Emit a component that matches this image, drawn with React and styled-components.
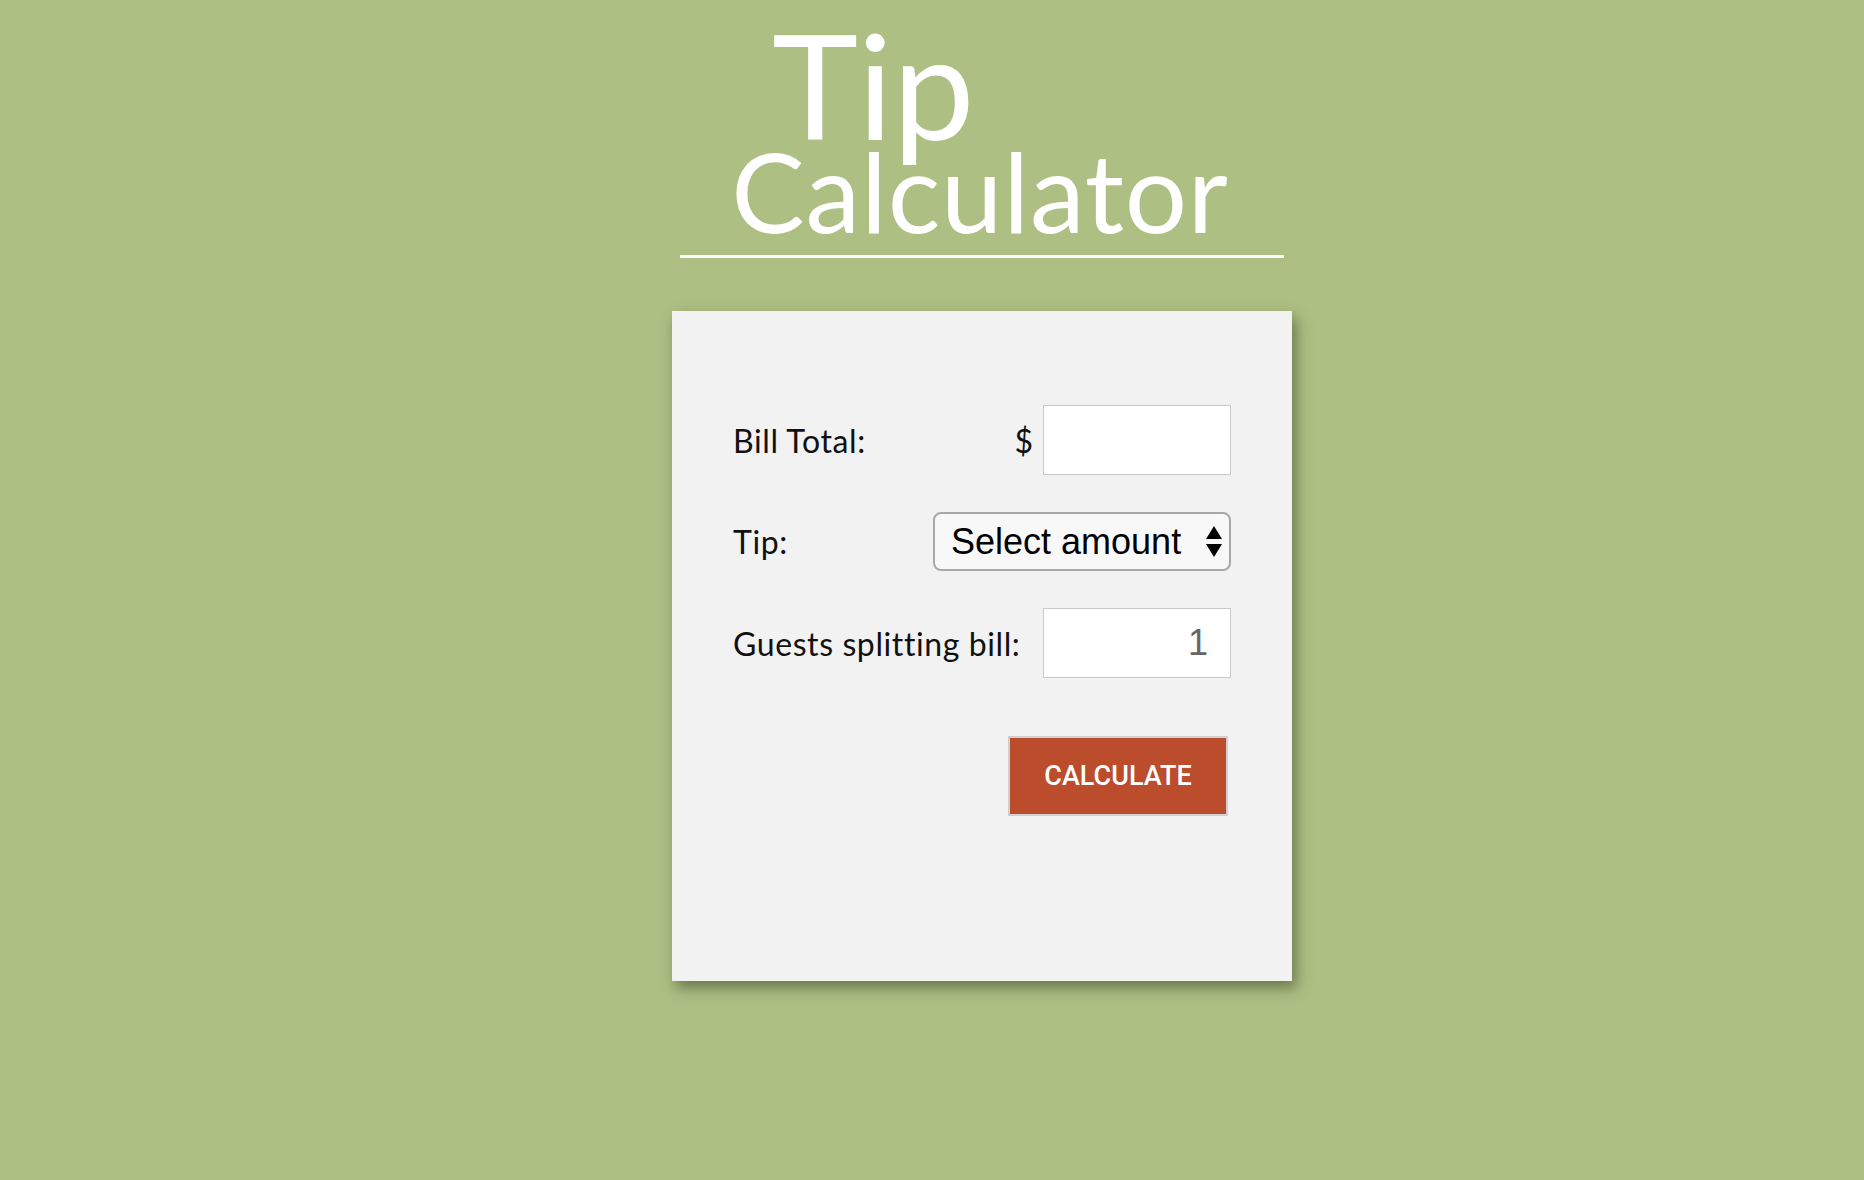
import React from 'react';
import styled, { createGlobalStyle } from 'styled-components';

const GlobalStyle = createGlobalStyle`
	body {
		margin: 0;
		background-color: #adbf83;
		font-family: 'Lato', 'Liberation Sans', sans-serif;
	}
`;

const Page = styled.main`
	min-height: 100vh;
	padding: 11px 0 0 100px;
	box-sizing: border-box;
`;

const Header = styled.header`
	width: 604px;
	margin: 0 auto;
	padding-bottom: 10px;
	border-bottom: 3px solid #fff;
	color: #fff;
`;

const TitleWord = styled.h1`
	margin: 0;
	font-weight: 400;
	line-height: 1;
	font-size: ${(p) => p.size}px;
	text-align: ${(p) => (p.offset ? 'left' : 'center')};
	padding-left: ${(p) => p.offset || 0}px;
	margin-top: ${(p) => p.pull || 0}px;
	padding-right: ${(p) => p.shift || 0}px;
	letter-spacing: ${(p) => p.spacing || 0}px;
`;

const Card = styled.section`
	width: 620px;
	height: 670px;
	margin: 53px auto 0;
	padding: 94px 61px 0;
	box-sizing: border-box;
	background-color: #f2f2f2;
	box-shadow: 4px 7px 13px rgba(40, 50, 20, 0.5);
	display: flex;
	flex-direction: column;
	gap: 37px;
`;

const Row = styled.div`
	display: flex;
	align-items: center;
	justify-content: space-between;
`;

const Label = styled.label`
	font-size: 32px;
	letter-spacing: 0.6px;
	color: #111;
`;

const Field = styled.div`
	display: flex;
	align-items: center;
	gap: 10px;
	font-size: 32px;
	color: #111;
`;

const TextBox = styled.input`
	width: 188px;
	height: 70px;
	box-sizing: border-box;
	border: 1px solid #c9c9c9;
	background: #fff;
	padding: 0 22px;
	font-family: 'Liberation Sans', Arial, sans-serif;
	font-size: 36px;
	color: #666;
	text-align: right;
	outline: none;
`;

const SelectWrap = styled.div`
	position: relative;
	width: 298px;
	height: 59px;
`;

const Select = styled.select`
	appearance: none;
	width: 100%;
	height: 100%;
	box-sizing: border-box;
	border: 2px solid #a8a8a8;
	border-radius: 8px;
	background: #f8f8f8;
	padding: 0 0 0 16px;
	font-family: 'Liberation Sans', Arial, sans-serif;
	font-size: 36px;
	color: #000;
	outline: none;
`;

const Arrows = styled.svg`
	position: absolute;
	right: 9px;
	top: 14px;
	pointer-events: none;
`;

const Button = styled.button`
	align-self: flex-end;
	margin: 21px 3px 0 0;
	width: 220px;
	height: 80px;
	border: 2px solid #cfcfcf;
	background-color: #bb4c2c;
	color: #fff;
	font-family: 'Roboto', 'Liberation Sans', Arial, sans-serif;
	font-weight: 500;
	font-size: 27px;
	cursor: pointer;
`;

export default function App() {
	return (
		<>
			<GlobalStyle />
			<Page>
				<Header>
					<TitleWord size={146} offset={92}>Tip</TitleWord>
					<TitleWord size={110} pull={-22} shift={4} spacing={0.8}>Calculator</TitleWord>
				</Header>
				<Card>
					<Row>
						<Label>Bill Total:</Label>
						<Field>
							$
							<TextBox type="text" />
						</Field>
					</Row>
					<Row>
						<Label>Tip:</Label>
						<SelectWrap>
							<Select defaultValue="">
								<option value="">Select amount</option>
								<option value="0.3">30% - Outstanding</option>
								<option value="0.2">20% - Good</option>
								<option value="0.15">15% - OK</option>
								<option value="0.1">10% - Bad</option>
							</Select>
							<Arrows width="16" height="31" viewBox="0 0 16 31">
								<path d="M8 0 L16 13 L0 13 Z M0 18 L16 18 L8 31 Z" fill="#000" />
							</Arrows>
						</SelectWrap>
					</Row>
					<Row>
						<Label>Guests splitting bill:</Label>
						<TextBox type="text" defaultValue="1" />
					</Row>
					<Button>CALCULATE</Button>
				</Card>
			</Page>
		</>
	);
}
